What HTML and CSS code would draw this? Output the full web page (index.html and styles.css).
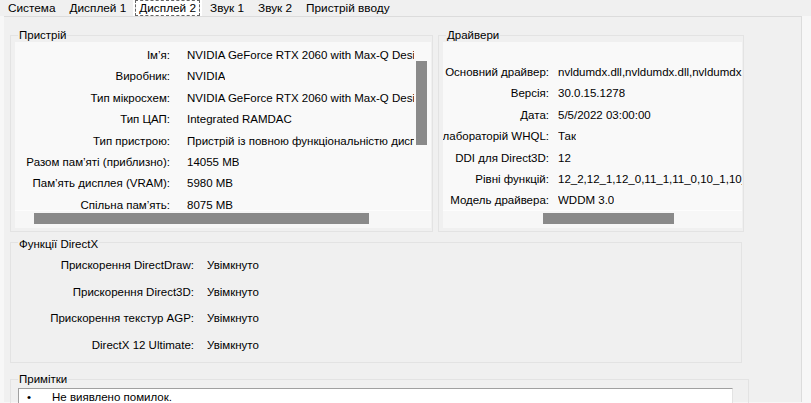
FILE: index.html
```html
<!DOCTYPE html>
<html lang="uk">
<head>
    <meta charset="UTF-8">
    <title>Засіб діагностики DirectX</title>
    <link rel="stylesheet" href="styles.css">
</head>
<body>
    <div class="window">
        <div class="tabs">
            <div class="tab">Система</div>
            <div class="tab">Дисплей 1</div>
            <div class="tab active"><span>Дисплей 2</span></div>
            <div class="tab">Звук 1</div>
            <div class="tab">Звук 2</div>
            <div class="tab">Пристрій вводу</div>
        </div>

        <div class="page">
            <div class="top-row">
                <div class="group device">
                    <div class="group-title">Пристрій</div>
                    <div class="list">
                        <div class="list-body">
                            <div class="row"><span class="key">Ім’я:</span><span class="val">NVIDIA GeForce RTX 2060 with Max-Q Design</span></div>
                            <div class="row"><span class="key">Виробник:</span><span class="val">NVIDIA</span></div>
                            <div class="row"><span class="key">Тип мікросхем:</span><span class="val">NVIDIA GeForce RTX 2060 with Max-Q Design</span></div>
                            <div class="row"><span class="key">Тип ЦАП:</span><span class="val">Integrated RAMDAC</span></div>
                            <div class="row"><span class="key">Тип пристрою:</span><span class="val">Пристрій із повною функціональністю дисплея</span></div>
                            <div class="row"><span class="key">Разом пам’яті (приблизно):</span><span class="val">14055 MB</span></div>
                            <div class="row"><span class="key">Пам’ять дисплея (VRAM):</span><span class="val">5980 MB</span></div>
                            <div class="row"><span class="key">Спільна пам’ять:</span><span class="val">8075 MB</span></div>
                        </div>
                        <div class="vscroll"><div class="thumb"></div></div>
                        <div class="hscroll"><div class="thumb"></div></div>
                    </div>
                </div>

                <div class="group drivers">
                    <div class="group-title">Драйвери</div>
                    <div class="list">
                        <div class="list-body">
                            <div class="row"><span class="key">Основний драйвер:</span><span class="val">nvldumdx.dll,nvldumdx.dll,nvldumdx.dll,nvldumdx.dll</span></div>
                            <div class="row"><span class="key">Версія:</span><span class="val">30.0.15.1278</span></div>
                            <div class="row"><span class="key">Дата:</span><span class="val">5/5/2022 03:00:00</span></div>
                            <div class="row"><span class="key">Підпис лабораторій WHQL:</span><span class="val">Так</span></div>
                            <div class="row"><span class="key">DDI для Direct3D:</span><span class="val">12</span></div>
                            <div class="row"><span class="key">Рівні функцій:</span><span class="val">12_2,12_1,12_0,11_1,11_0,10_1,10_0,9_3</span></div>
                            <div class="row"><span class="key">Модель драйвера:</span><span class="val">WDDM 3.0</span></div>
                        </div>
                        <div class="hscroll"><div class="thumb"></div></div>
                    </div>
                </div>
            </div>

            <div class="group directx">
                <div class="group-title">Функції DirectX</div>
                <div class="row"><span class="key">Прискорення DirectDraw:</span><span class="val">Увімкнуто</span></div>
                <div class="row"><span class="key">Прискорення Direct3D:</span><span class="val">Увімкнуто</span></div>
                <div class="row"><span class="key">Прискорення текстур AGP:</span><span class="val">Увімкнуто</span></div>
                <div class="row"><span class="key">DirectX 12 Ultimate:</span><span class="val">Увімкнуто</span></div>
            </div>

            <div class="group notes">
                <div class="group-title">Примітки</div>
                <div class="notes-box">
                    <div class="note"><span class="bullet">•</span>Не виявлено помилок.</div>
                </div>
            </div>
        </div>
    </div>
</body>
</html>
```

FILE: styles.css
```css
body {
    margin: 0;
    background-color: #f7f7f7;
    font-family: "Liberation Sans", Arial, sans-serif;
    font-size: 11.5px;
    color: #000;
}

.window {
    width: 811px;
    height: 403px;
    overflow: hidden;
}

/* tab strip */
.tabs {
    display: flex;
    height: 16px;
    padding-left: 1px;
    background-color: #f0f0f0;
}

.tab {
    padding: 0 7px;
    line-height: 16px;
    font-size: 11.8px;
    white-space: nowrap;
}

.tab.active {
    background-color: #fff;
    padding: 0 2px;
    margin-right: 1px;
}

.tab.active span {
    display: block;
    padding: 0 3px;
    line-height: 14px;
    border: 1px dashed #666;
}

/* tab page */
.page {
    margin-left: 4px;
    width: 798px;
    height: 386px;
    padding: 18px 0 0 6px;
    box-sizing: border-box;
    background-color: #f0f0f0;
    border-top: 1px solid #dcdcdc;
    border-right: 1px solid #dcdcdc;
}

.top-row {
    display: flex;
    gap: 5px;
}

.group {
    position: relative;
    border: 1px solid #e3e3e3;
}

.group-title {
    position: absolute;
    top: -8px;
    left: 7px;
    padding: 0 1px;
    line-height: 14px;
    background-color: #f0f0f0;
}

.device,
.drivers {
    padding: 6px 1px 3px 4px;
}

/* list views */
.list {
    position: relative;
    height: 186px;
    background-color: #f9f9f9;
    overflow: hidden;
}

.device .list {
    width: 416px;
}

.drivers .list {
    width: 299px;
}

.list-body {
    height: 168px;
    overflow: hidden;
    box-sizing: border-box;
}

.device .list-body {
    width: 399px;
    padding-top: 3px;
}

.drivers .list-body {
    padding-top: 20px;
}

.row {
    display: flex;
    white-space: nowrap;
}

.list .row {
    height: 21.4px;
    line-height: 21.4px;
}

.key {
    flex: none;
    display: flex;
    justify-content: flex-end;
    overflow: hidden;
}

.val {
    overflow: hidden;
}

.device .key {
    width: 155px;
    margin-right: 17px;
}

.drivers .key {
    width: 106px;
    margin-right: 9px;
}

.vscroll {
    position: absolute;
    top: 0;
    right: 0;
    width: 17px;
    height: 168px;
    background-color: #f9f9f9;
}

.vscroll .thumb {
    margin: 19px 0 0 2px;
    width: 11px;
    height: 84px;
    background-color: #8a8a8a;
}

.hscroll {
    height: 18px;
    border-top: 1px solid #fdfdfd;
    box-sizing: border-box;
    background-color: #f7f7f7;
}

.hscroll .thumb {
    height: 11px;
    margin-top: 2px;
    background-color: #8a8a8a;
}

.device .hscroll .thumb {
    margin-left: 19px;
    width: 335px;
}

.drivers .hscroll .thumb {
    margin-left: 100px;
    width: 131px;
}

/* DirectX features */
.directx {
    margin-top: 10px;
    width: 730px;
    padding: 9px 0 4px 0;
}

.directx .group-title {
    top: -6px;
}

.directx .row {
    height: 26.5px;
    line-height: 26.5px;
}

.directx .key {
    width: 183px;
    margin-right: 13px;
}

/* notes */
.notes {
    margin-top: 16px;
    width: 730px;
    height: 40px;
    padding: 8px 0 0 7px;
    border-bottom: none;
}

.notes-box {
    width: 713px;
    height: 40px;
    background-color: #fff;
    border: 1px solid #a0a0a0;
    border-right-color: #e3e3e3;
}

.note {
    line-height: 16px;
    padding-left: 8px;
}

.bullet {
    display: inline-block;
    width: 25px;
}
```
